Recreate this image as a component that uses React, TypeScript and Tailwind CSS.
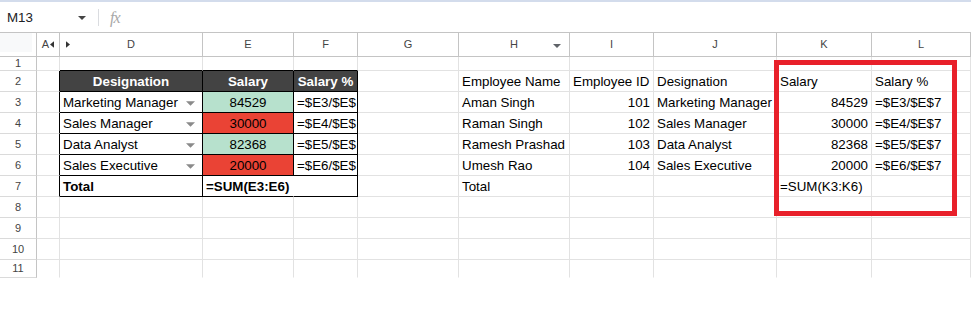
import type { ReactNode } from "react";

// column widths: A, D, E, F, G, H, I, J, K, L
const colW = ["w-[23px]", "w-[143px]", "w-[91px]", "w-[64px]", "w-[101px]", "w-[111px]", "w-[84px]", "w-[123px]", "w-[95px]", "w-[99px]"];
const letters = ["A", "D", "E", "F", "G", "H", "I", "J", "K", "L"];

type Cell = { t?: ReactNode; cls?: string; r?: string; b?: string };

const GR = "border-r-[#e2e2e2]";
const GB = "border-b-[#e2e2e2]";

function Tri({ dir, cls }: { dir: "down" | "left" | "right"; cls?: string }) {
  const d = dir === "down" ? "M0 0 L8 0 L4 4 Z" : dir === "left" ? "M5 0 L5 8 L0 4 Z" : "M0 0 L0 8 L5 4 Z";
  const vb = dir === "down" ? "0 0 8 4" : "0 0 5 8";
  return (
    <svg viewBox={vb} className={cls}>
      <path d={d} fill="currentColor" />
    </svg>
  );
}

function Row({ n, h, cells }: { n: number; h: string; cells: Cell[] }) {
  return (
    <div className={"flex " + h}>
      <div className="w-[37px] shrink-0 flex items-center justify-center border-r border-b border-r-[#c4c4c4] border-b-[#dadada] text-[11px] text-[#444]">
        {n}
      </div>
      {cells.map((c, i) => (
        <div
          key={i}
          className={
            "shrink-0 flex items-center pt-[2px] border-r border-b whitespace-nowrap " +
            colW[i] + " " + (c.r ?? GR) + " " + (c.b ?? GB) + " " + (c.cls ?? "")
          }
        >
          {c.t}
        </div>
      ))}
    </div>
  );
}

const blank = (): Cell[] => letters.map(() => ({}));

const BK = "border-r-black";
const BB = "border-b-black";

const dd = (label: string): Cell => ({
  t: (
    <div className="flex w-full items-center justify-between pl-[3px] pr-[7px]">
      <span>{label}</span>
      <Tri dir="down" cls="w-[9px] h-[5px] text-[#8a8a8a]" />
    </div>
  ),
  r: BK,
  b: BB,
});

const sal = (v: string, green: boolean): Cell => ({
  t: v,
  cls: "justify-center " + (green ? "bg-[#b7e1cd]" : "bg-[#ea4335]"),
  r: BK,
  b: BB,
});

const pct = (v: string): Cell => ({ t: v, cls: "overflow-hidden pl-[3px]", r: BK, b: BB });

const txt = (v: string): Cell => ({ t: v, cls: "pl-[3px]" });
const num = (v: string): Cell => ({ t: v, cls: "justify-end pr-[3px]" });

const people = [
  ["Aman Singh", "101", "Marketing Manager", "84529", "=$E3/$E$7"],
  ["Raman Singh", "102", "Sales Manager", "30000", "=$E4/$E$7"],
  ["Ramesh Prashad", "103", "Data Analyst", "82368", "=$E5/$E$7"],
  ["Umesh Rao", "104", "Sales Executive", "20000", "=$E6/$E$7"],
];
const left = [
  ["Marketing Manager", "84529", "=$E3/$E$", true],
  ["Sales Manager", "30000", "=$E4/$E$", false],
  ["Data Analyst", "82368", "=$E5/$E$", true],
  ["Sales Executive", "20000", "=$E6/$E$", false],
] as const;

export default function App() {
  const row1 = blank();
  row1[1] = { b: BB };
  row1[2] = { b: BB };
  row1[3] = { b: BB };

  const hd = "justify-center bg-[#434343] text-white font-bold";
  const row2: Cell[] = [
    { r: BK },
    { t: "Designation", cls: hd, r: BK, b: BB },
    { t: "Salary", cls: hd, r: BK, b: BB },
    { t: "Salary %", cls: hd, r: BK, b: BB },
    {},
    txt("Employee Name"),
    txt("Employee ID"),
    txt("Designation"),
    txt("Salary"),
    txt("Salary %"),
  ];

  const dataRows: Cell[][] = left.map((l, i) => {
    const p = people[i];
    return [
      { r: BK },
      dd(l[0]),
      sal(l[1], l[3]),
      pct(l[2]),
      {},
      txt(p[0]),
      num(p[1]),
      txt(p[2]),
      num(p[3]),
      txt(p[4]),
    ];
  });

  const row7: Cell[] = [
    { r: BK },
    { t: "Total", cls: "pl-[3px] font-bold", r: BK, b: BB },
    { t: "=SUM(E3:E6)", cls: "pl-[3px] font-bold overflow-visible", r: "border-r-transparent", b: BB },
    { r: BK, b: BB },
    {},
    txt("Total"),
    {},
    {},
    txt("=SUM(K3:K6)"),
    {},
  ];

  const row11 = letters.map(() => ({ b: "border-b-transparent" }));

  return (
    <div className="relative w-[971px] h-[314px] bg-white overflow-hidden font-[family-name:'Liberation_Sans',Arial,sans-serif] text-[13.33px] text-black">
      {/* top strip + formula bar */}
      <div className="h-[2px] bg-[#d3dcec]" />
      <div className="flex h-[31px] items-center border-b border-[#c4c4c4]">
        <div className="w-[98px] flex items-center justify-between pl-[7px] pr-[12px] pt-[2px] text-[13.33px] text-[#202124]">
          <span>M13</span>
          <Tri dir="down" cls="w-[8px] h-[4px] text-[#444]" />
        </div>
        <div className="w-px h-[17px] bg-[#dadce0]" />
        <span className="ml-[11px] pt-[2px] font-[family-name:'Liberation_Serif',serif] italic text-[16px] text-[#a8a8a8] tracking-[-1px]">fx</span>
      </div>

      {/* column headers */}
      <div className="flex h-[24px]">
        <div className="w-[37px] shrink-0 border-r border-b border-[#c4c4c4] pr-[4px] pb-[4px]">
          <div className="w-full h-full bg-[#f8f9fa]" />
        </div>
        {letters.map((l, i) => (
          <div
            key={l}
            className={"shrink-0 relative flex items-center justify-center border-r border-b border-[#c4c4c4] text-[11px] text-[#444] " + colW[i]}
          >
            {l === "A" ? (
              <span className="flex items-center gap-[1px]">
                A<Tri dir="left" cls="w-[4px] h-[7px] text-[#333]" />
              </span>
            ) : (
              l
            )}
            {l === "D" && <Tri dir="right" cls="absolute left-[6px] top-[8px] w-[4px] h-[7px] text-[#333]" />}
            {l === "H" && <Tri dir="down" cls="absolute right-[8px] top-[11px] w-[8px] h-[4px] text-[#5f6368]" />}
          </div>
        ))}
      </div>

      <Row n={1} h="h-[14px]" cells={row1} />
      <Row n={2} h="h-[21px]" cells={row2} />
      {dataRows.map((c, i) => (
        <Row key={i} n={i + 3} h="h-[21px]" cells={c} />
      ))}
      <Row n={7} h="h-[21px]" cells={row7} />
      <Row n={8} h="h-[21px]" cells={blank()} />
      <Row n={9} h="h-[21px]" cells={blank()} />
      <Row n={10} h="h-[21px]" cells={blank()} />
      <Row n={11} h="h-[18px]" cells={row11} />

      {/* highlight box */}
      <div className="absolute left-[774px] top-[60px] w-[183px] h-[156px] border-[5px] border-[#e8202a]" />
    </div>
  );
}
